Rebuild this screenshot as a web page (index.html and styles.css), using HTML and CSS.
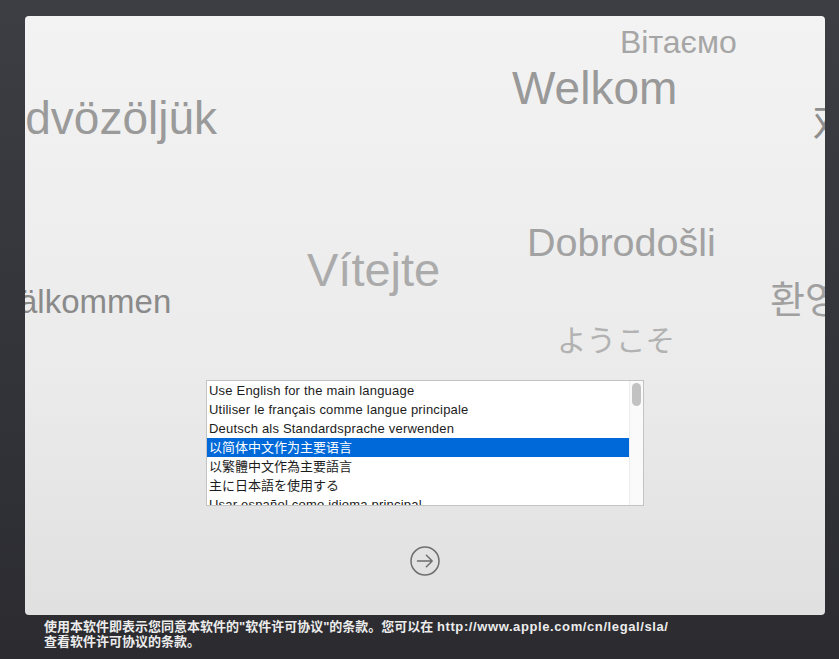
FILE: index.html
```html
<!DOCTYPE html>
<html lang="zh-CN">
<head>
<meta charset="utf-8">
<title>Welcome</title>
<link rel="stylesheet" href="styles.css">
</head>
<body>
<div class="screen">
  <div class="panel">
    <div class="word w-uk">Вітаємо</div>
    <div class="word w-nl">Welkom</div>
    <div class="word w-hu">Üdvözöljük</div>
    <div class="word w-zh">欢迎</div>
    <div class="word w-cs">Vítejte</div>
    <div class="word w-hr">Dobrodošli</div>
    <div class="word w-sv">Välkommen</div>
    <div class="word w-ko">환영합니다</div>
    <div class="word w-ja">ようこそ</div>

    <div class="list">
      <div class="rows">
        <div class="row">Use English for the main language</div>
        <div class="row">Utiliser le français comme langue principale</div>
        <div class="row">Deutsch als Standardsprache verwenden</div>
        <div class="row cjk selected">以简体中文作为主要语言</div>
        <div class="row cjk">以繁體中文作為主要語言</div>
        <div class="row cjk">主に日本語を使用する</div>
        <div class="row">Usar español como idioma principal</div>
      </div>
      <div class="scrollbar"><div class="thumb"></div></div>
    </div>

    <button class="next" aria-label="继续">
      <svg width="30" height="30" viewBox="0 0 30 30">
        <circle cx="15" cy="15" r="14" fill="none" stroke="#6e6e6e" stroke-width="1.5"/>
        <path d="M7.5 15 H22.2 M16.4 9.3 L22.2 15 L16.4 20.7" fill="none" stroke="#6e6e6e" stroke-width="1.5" stroke-linecap="round" stroke-linejoin="round"/>
      </svg>
    </button>
  </div>
  <div class="legal">
    <div>使用本软件即表示您同意本软件的"软件许可协议"的条款。您可以在 <span class="url">http://www.apple.com/cn/legal/sla/</span></div>
    <div>查看软件许可协议的条款。</div>
  </div>
</div>
</body>
</html>
```
FILE: styles.css
```css
html, body {
  margin: 0;
  padding: 0;
}
body {
  width: 839px;
  height: 659px;
  overflow: hidden;
  background: linear-gradient(180deg, #3d3e44 0%, #34353a 50%, #2b2b30 100%);
  font-family: "Liberation Sans", "Noto Sans CJK SC", sans-serif;
}
.screen {
  padding: 16px 0 0 25px;
}
.panel {
  position: relative;
  width: 800px;
  height: 599px;
  border-radius: 4px;
  overflow: hidden;
  background: linear-gradient(180deg, #f3f3f3 0%, #ebebeb 60%, #e0e0e0 100%);
  display: flex;
  flex-direction: column;
  align-items: center;
  padding-top: 364px;
  box-sizing: border-box;
}
.word {
  position: absolute;
  line-height: 1;
  white-space: nowrap;
  font-family: "Liberation Sans", "Noto Sans CJK SC", sans-serif;
  color: #9c9c9c;
}
.w-uk { left: 595px; top: 10px; font-size: 32px; color: #a6a6a6; }
.w-nl { left: 487px; top: 49px; font-size: 46px; color: #999999; }
.w-hu { left: -33px; top: 79px; font-size: 46px; color: #9a9a9a; }
.w-zh { left: 788px; top: 84px; font-size: 41px; font-family: "Noto Sans CJK SC", sans-serif; color: #8e8e8e; }
.w-cs { left: 282px; top: 230px; font-size: 47px; color: #ababab; }
.w-hr { left: 502px; top: 207px; font-size: 39.5px; color: #a2a2a2; }
.w-sv { left: -28px; top: 269px; font-size: 33px; color: #8a8a8a; }
.w-ko { left: 745px; top: 262px; font-size: 38px; font-family: "Noto Sans CJK KR", sans-serif; color: #a0a0a0; }
.w-ja { left: 532px; top: 308px; font-size: 29.5px; font-family: "Noto Sans CJK JP", sans-serif; color: #b2b2b2; }

.list {
  width: 438px;
  height: 126px;
  box-sizing: border-box;
  border: 1px solid #c3c3c3;
  background: #ffffff;
  display: flex;
  overflow: hidden;
}
.rows {
  flex: 1;
  overflow: hidden;
}
.row {
  height: 19px;
  line-height: 19px;
  font-size: 13px;
  letter-spacing: 0.2px;
  padding-left: 2px;
  color: #1c1c1c;
  white-space: nowrap;
  font-family: "Liberation Sans", "Noto Sans CJK SC", sans-serif;
}
.row.cjk {
  letter-spacing: 0;
}
.row.selected {
  background: #0069d9;
  color: #ffffff;
}
.scrollbar {
  width: 14px;
  background: #fafafa;
  border-left: 1px solid #ececec;
  padding-top: 2px;
  box-sizing: border-box;
  display: flex;
  justify-content: center;
}
.thumb {
  width: 9px;
  height: 23px;
  border-radius: 4.5px;
  background: #c2c2c2;
}
.next {
  margin-top: 40px;
  width: 30px;
  height: 30px;
  padding: 0;
  border: none;
  background: transparent;
  display: block;
}
.next svg { display: block; }

.legal {
  margin: 4px 0 0 19px;
  color: #ececec;
  font-weight: bold;
  font-size: 13px;
  line-height: 15px;
  white-space: nowrap;
  font-family: "Liberation Sans", "Noto Sans CJK SC", sans-serif;
}
.url {
  letter-spacing: 0.6px;
}
```
